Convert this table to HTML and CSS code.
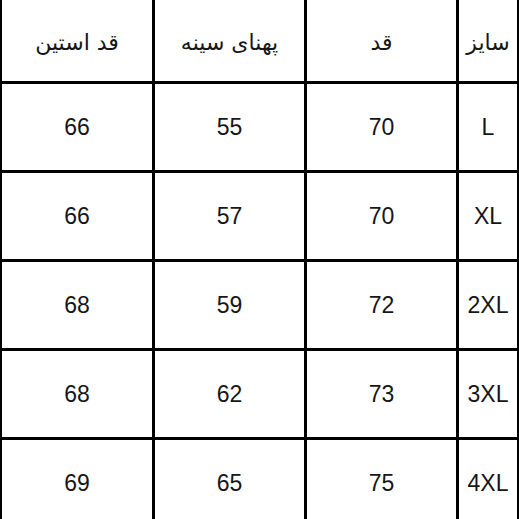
FILE: index.html
```html
<!DOCTYPE html>
<html lang="fa">
<head>
<meta charset="utf-8">
<link rel="stylesheet" href="styles.css">
</head>
<body>
<div class="chart" dir="rtl">
  <div class="cell head">سایز</div>
  <div class="cell head">قد</div>
  <div class="cell head">پهنای سینه</div>
  <div class="cell head">قد استین</div>

  <div class="cell">L</div><div class="cell">70</div><div class="cell">55</div><div class="cell">66</div>
  <div class="cell">XL</div><div class="cell">70</div><div class="cell">57</div><div class="cell">66</div>
  <div class="cell">2XL</div><div class="cell">72</div><div class="cell">59</div><div class="cell">68</div>
  <div class="cell">3XL</div><div class="cell">73</div><div class="cell">62</div><div class="cell">68</div>
  <div class="cell">4XL</div><div class="cell">75</div><div class="cell">65</div><div class="cell">69</div>
</div>
</body>
</html>
```
FILE: styles.css
```css
html, body {
  margin: 0;
  padding: 0;
  background: #fff;
  overflow: hidden;
}
.chart {
  width: 519px;
  box-sizing: border-box;
  display: grid;
  grid-template-columns: 58px 149px 149px 150px;
  grid-template-rows: 81px repeat(5, 86px);
  gap: 3px;
  padding: 0 2px;
  background: #000;
}
.cell {
  background: #fff;
  display: flex;
  align-items: center;
  justify-content: center;
  font-family: "Liberation Sans", Arial, sans-serif;
  font-size: 23px;
  color: #161616;
  padding-top: 1px;
}
.head {
  font-family: "DejaVu Sans", "Noto Sans", sans-serif;
  font-size: 22px;
  padding-top: 4px;
}
```
